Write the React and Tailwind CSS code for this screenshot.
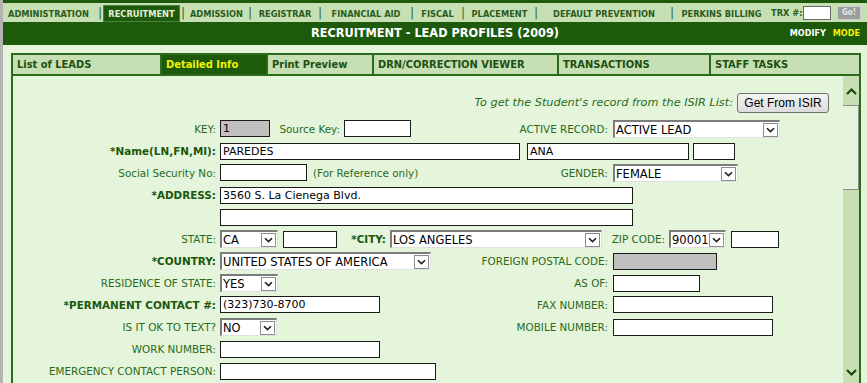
import React from "react";

const Chev = ({ up = false }) => (
  <svg viewBox="0 0 9 6" className="w-[9px] h-[6px]">
    <polyline
      points={up ? "1,5 4.5,1.5 8,5" : "1,1.2 4.5,4.6 8,1.2"}
      fill="none"
      stroke="#1e1e1e"
      strokeWidth="1.6"
    />
  </svg>
);

const ScrollCaret = ({ up = false }) => (
  <svg viewBox="0 0 11 7" className="w-[11px] h-[7px]">
    <polyline
      points={up ? "1,6 5.5,1.5 10,6" : "1,1 5.5,5.5 10,1"}
      fill="none"
      stroke="#1b4a10"
      strokeWidth="2.2"
    />
  </svg>
);

function Input({ cls, value, gray }) {
  return (
    <div
      className={`${cls} h-[17px] shrink-0 border border-[#1a1a1a] ${
        gray ? "bg-[#c0c0c0]" : "bg-white"
      } text-[11px] leading-[15px] pl-[2px] text-black whitespace-nowrap overflow-hidden`}
    >
      {value}
    </div>
  );
}

function Select({ cls, value }) {
  return (
    <div
      className={`${cls} h-[18px] shrink-0 flex items-center bg-white border-t-2 border-l-2 border-r border-b border-t-[#7c7c7c] border-l-[#7c7c7c] border-r-[#e0e0e0] border-b-[#e0e0e0]`}
    >
      <span className="flex-1 pl-[1px] text-[11.5px] leading-[14px] text-black whitespace-nowrap overflow-hidden">
        {value}
      </span>
      <span className="w-[15px] h-[14px] mr-[1px] border border-[#8d8d8d] bg-white flex items-center justify-center">
        <Chev />
      </span>
    </div>
  );
}

function Lbl({ children, bold, cls = "" }) {
  return (
    <span
      className={`${cls} pt-[2px] whitespace-nowrap ${
        bold ? "font-bold text-[#1b570b]" : "text-[#2a6a1a]"
      }`}
    >
      {children}
    </span>
  );
}

function Row({ label, bold, children }) {
  return (
    <div className="h-[22px] flex items-center">
      <div className="w-[203px] shrink-0 flex justify-end">
        {label ? <Lbl bold={bold}>{label}</Lbl> : null}
      </div>
      <div className="ml-[4px] flex items-center">{children}</div>
    </div>
  );
}

function Split({ mid, label, field }) {
  return (
    <>
      <div className="w-[258px] shrink-0 flex items-center">{mid}</div>
      <div className="w-[130px] shrink-0 flex justify-end">
        <Lbl>{label}</Lbl>
      </div>
      <div className="ml-[5px] flex items-center">{field}</div>
    </>
  );
}

const navItems = [
  { t: "ADMINISTRATION", cls: "w-[94px] justify-start pl-[5px]" },
  { sep: true },
  { t: "RECRUITMENT", cls: "w-[77px] justify-center", active: true },
  { sep: true },
  { t: "ADMISSION", cls: "w-[61px] justify-center" },
  { sep: true },
  { t: "REGISTRAR", cls: "w-[64px] justify-center" },
  { sep: true },
  { t: "FINANCIAL AID", cls: "w-[86px] justify-center" },
  { sep: true },
  { t: "FISCAL", cls: "w-[45px] justify-center" },
  { sep: true },
  { t: "PLACEMENT", cls: "w-[67px] justify-center" },
  { sep: true },
  { t: "DEFAULT PREVENTION", cls: "w-[130px] justify-center" },
  { sep: true },
  { t: "PERKINS BILLING", cls: "w-[93px] justify-center" },
];

const tabs = [
  { t: "List of LEADS", cls: "w-[149px]" },
  { t: "Detailed Info", cls: "w-[106px]", active: true },
  { t: "Print Preview", cls: "w-[106px]" },
  { t: "DRN/CORRECTION VIEWER", cls: "w-[185px]" },
  { t: "TRANSACTIONS", cls: "w-[152px]" },
  { t: "STAFF TASKS", cls: "flex-1" },
];

export default function App() {
  return (
    <div className="w-[867px] h-[383px] overflow-hidden bg-[#e5f5dc] border-l-[3px] border-l-[#b3b3b3] font-['DejaVu_Sans',sans-serif] text-[10.4px] flex flex-col">
      {/* top line */}
      <div className="h-[3px] bg-[#1d5a0c] shrink-0" />
      {/* nav */}
      <div className="h-[19px] shrink-0 bg-[#c6e0b3] flex items-center font-['DejaVu_Sans_Condensed','DejaVu_Sans',sans-serif] font-bold text-[9.2px] text-[#2b5b1e]">
        {navItems.map((n, i) =>
          n.sep ? (
            <div key={i} className="w-[6px] flex justify-center text-[#2b5b1e] font-normal text-[12px]">
              |
            </div>
          ) : (
            <div
              key={i}
              className={`${n.cls} h-[17px] mt-[2px] flex items-center whitespace-nowrap ${
                n.active
                  ? "bg-[#1d5a0c] text-[#e6f0dc] border border-[#4f8040]"
                  : ""
              }`}
            >
              {n.t}
            </div>
          )
        )}
        <div className="w-[35px] pl-[3px] whitespace-nowrap">TRX #:</div>
        <div className="w-[28px] h-[14px] bg-white border border-[#6a6a6a]" />
        <div className="ml-[6px] w-[24px] h-[14px] bg-[#9c9c9c] border border-[#d0d0d0] text-[#e8e8e8] text-[8px] flex items-center justify-center">
          Go!
        </div>
      </div>
      {/* title */}
      <div className="h-[23px] shrink-0 bg-[#1d5a0c] grid grid-cols-[1fr_auto_1fr] items-center font-['DejaVu_Sans_Condensed','DejaVu_Sans',sans-serif]">
        <div />
        <div className="text-white font-bold text-[12.6px] whitespace-nowrap">
          RECRUITMENT - LEAD PROFILES (2009)
        </div>
        <div className="flex justify-end pr-[7px] font-bold text-[9px] gap-[7px]">
          <span className="text-white">MODIFY</span>
          <span className="text-[#f2f200]">MODE</span>
        </div>
      </div>
      {/* body */}
      <div className="flex-1 pl-[8px] pr-[6px] pt-[8px] flex flex-col min-h-0">
        {/* tabs */}
        <div className="h-[23px] shrink-0 flex border-2 border-[#2c6a1c] font-['DejaVu_Sans_Condensed','DejaVu_Sans',sans-serif] font-bold text-[11px]">
          {tabs.map((t, i) => (
            <div
              key={i}
              className={`${t.cls} h-full flex items-center pl-[4px] pt-[2px] whitespace-nowrap ${
                i < tabs.length - 1 ? "border-r-2 border-r-[#2c6a1c]" : ""
              } ${
                t.active
                  ? "bg-[#1d5a0c] text-[#f2f200]"
                  : "bg-[#c6e0b3] text-[#1d4f10]"
              }`}
            >
              {t.t}
            </div>
          ))}
        </div>
        {/* panel */}
        <div className="flex-1 flex border-l-2 border-r-2 border-[#2c6a1c] min-h-0">
          <div className="flex-1 pt-[16px] flex flex-col">
            <div className="h-[22px] flex items-center justify-end pr-[14px]">
              <span className="italic text-[11.3px] text-[#2a6a1a] whitespace-nowrap">
                To get the Student's record from the ISIR List:
              </span>
              <div className="ml-[4px] w-[92px] h-[20px] rounded-[3px] border border-[#707070] bg-gradient-to-b from-[#f4f4f4] to-[#dcdcdc] flex items-center justify-center font-['Liberation_Sans',sans-serif] text-[12px] text-black">
                Get From ISIR
              </div>
            </div>
            <div className="mt-[4px] flex flex-col">
              <Row label="KEY:">
                <Split
                  mid={
                    <>
                      <Input cls="w-[50px]" value="1" gray />
                      <div className="w-[70px] flex justify-end">
                        <Lbl>Source Key:</Lbl>
                      </div>
                      <div className="ml-[4px]">
                        <Input cls="w-[67px]" />
                      </div>
                    </>
                  }
                  label="ACTIVE RECORD:"
                  field={<Select cls="w-[167px]" value="ACTIVE LEAD" />}
                />
              </Row>
              <Row label="*Name(LN,FN,MI):" bold>
                <Input cls="w-[300px]" value="PAREDES" />
                <div className="ml-[7px]">
                  <Input cls="w-[162px]" value="ANA" />
                </div>
                <div className="ml-[4px]">
                  <Input cls="w-[42px]" />
                </div>
              </Row>
              <Row label="Social Security No:">
                <Split
                  mid={
                    <>
                      <Input cls="w-[87px]" />
                      <Lbl cls="ml-[6px]">(For Reference only)</Lbl>
                    </>
                  }
                  label="GENDER:"
                  field={<Select cls="w-[125px]" value="FEMALE" />}
                />
              </Row>
              <Row label="*ADDRESS:" bold>
                <Input cls="w-[413px]" value="3560 S. La Cienega Blvd." />
              </Row>
              <Row label="">
                <Input cls="w-[413px]" />
              </Row>
              <Row label="STATE:">
                <Select cls="w-[58px]" value="CA" />
                <div className="ml-[5px]">
                  <Input cls="w-[54px]" />
                </div>
                <div className="w-[49px] flex justify-end">
                  <Lbl bold>*CITY:</Lbl>
                </div>
                <div className="ml-[4px]">
                  <Select cls="w-[212px]" value="LOS ANGELES" />
                </div>
                <div className="w-[63px] flex justify-end">
                  <Lbl>ZIP CODE:</Lbl>
                </div>
                <div className="ml-[4px]">
                  <Select cls="w-[57px]" value="90001" />
                </div>
                <div className="ml-[5px]">
                  <Input cls="w-[48px]" />
                </div>
              </Row>
              <Row label="*COUNTRY:" bold>
                <Split
                  mid={<Select cls="w-[211px]" value="UNITED STATES OF AMERICA" />}
                  label="FOREIGN POSTAL CODE:"
                  field={<Input cls="w-[104px]" gray />}
                />
              </Row>
              <Row label="RESIDENCE OF STATE:">
                <Split
                  mid={<Select cls="w-[58px]" value="YES" />}
                  label="AS OF:"
                  field={<Input cls="w-[87px]" />}
                />
              </Row>
              <Row label="*PERMANENT CONTACT #:" bold>
                <Split
                  mid={<Input cls="w-[160px]" value="(323)730-8700" />}
                  label="FAX NUMBER:"
                  field={<Input cls="w-[160px]" />}
                />
              </Row>
              <Row label="IS IT OK TO TEXT?">
                <Split
                  mid={<Select cls="w-[57px]" value="NO" />}
                  label="MOBILE NUMBER:"
                  field={<Input cls="w-[160px]" />}
                />
              </Row>
              <Row label="WORK NUMBER:">
                <Input cls="w-[160px]" />
              </Row>
              <Row label="EMERGENCY CONTACT PERSON:">
                <Input cls="w-[216px]" />
              </Row>
            </div>
          </div>
          {/* scrollbar */}
          <div className="w-[16px] shrink-0 flex flex-col bg-[#c6e0b3]">
            <div className="h-[29px] flex justify-center pt-[12px]">
              <ScrollCaret up />
            </div>
            <div className="h-[85px] bg-[#e5f5dc] border-t border-r border-b border-[#8c8c8c]" />
            <div className="flex-1" />
            <div className="h-[14px] flex justify-center">
              <ScrollCaret />
            </div>
          </div>
        </div>
      </div>
    </div>
  );
}
